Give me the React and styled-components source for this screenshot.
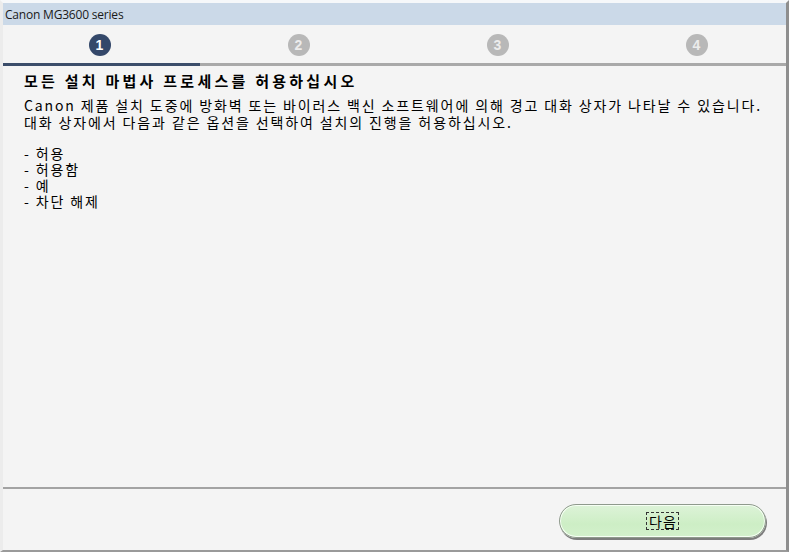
import React from "react";
import styled, { createGlobalStyle } from "styled-components";

const GlobalStyle = createGlobalStyle`
  html, body { margin: 0; padding: 0; background: #f4f4f4; }
  body { font-family: "Noto Sans CJK KR", "Noto Sans", sans-serif; }
`;

const Window = styled.div`
  width: 789px;
  height: 552px;
  box-sizing: border-box;
  display: flex;
  flex-direction: column;
  overflow: hidden;
  background: #f4f4f4;
  border-top: 3px solid #f6f8fa;
  border-left: 3px solid #ececec;
  border-right: 3px solid #8e8e8e;
  border-bottom: 2px solid #9a9a9a;
`;

const TitleBar = styled.div`
  height: 22px;
  background: #cbd9e8;
  display: flex;
  align-items: center;
  padding-left: 2px;
  font-family: "Open Sans", "Liberation Sans", sans-serif;
  font-size: 12px;
  color: #1a1a1a;
  letter-spacing: -0.2px;
`;

const StepRow = styled.div`
  height: 38px;
  margin-left: -3px;
  display: grid;
  grid-template-columns: repeat(4, 199px);
  align-items: center;
  justify-items: center;
`;

const StepDot = styled.div`
  width: 22px;
  height: 22px;
  border-radius: 50%;
  background: ${(p) => (p.$active ? "#34486a" : "#b8b8b8")};
  color: ${(p) => (p.$active ? "#ffffff" : "#ececec")};
  display: flex;
  align-items: center;
  justify-content: center;
  font-family: "Liberation Sans", Arial, sans-serif;
  font-weight: bold;
  font-size: 14px;
  margin-top: 2px;
`;

const Track = styled.div`
  height: 3px;
  background: #a9a9a9;
  display: flex;
`;

const TrackFill = styled.div`
  width: 197px;
  background: #3b4d6a;
`;

const Content = styled.div`
  flex: 1;
  padding: 4px 0 0 21px;
  color: #000;
`;

const Heading = styled.h1`
  margin: 0 0 5px;
  font-size: 15px;
  font-weight: bold;
  line-height: 22px;
  letter-spacing: 3.25px;
`;

const Para = styled.p`
  margin: 0 0 14px;
  font-size: 14px;
  line-height: 17px;
  letter-spacing: 1.88px;
  white-space: nowrap;
`;

const OptionList = styled.ul`
  list-style: none;
  margin: 0;
  padding: 0;
  font-size: 14px;
  line-height: 16px;
  letter-spacing: 1.88px;

  li { height: 16px; }
`;

const Footer = styled.div`
  height: 63px;
  border-top: 2px solid #a3a3a3;
  display: flex;
  justify-content: flex-end;
  align-items: flex-start;
  padding: 15px 20px 0 0;
  box-sizing: border-box;
`;

const NextButton = styled.button`
  width: 207px;
  height: 34px;
  border-radius: 17px;
  border: 1px solid #8f9a8d;
  background: linear-gradient(#ddf3d8, #cdeec5 60%, #d3f0cc);
  box-shadow: inset 0 0 0 1px #f6fff4, 1px 2px 0 #7d7d7d;
  display: flex;
  align-items: center;
  justify-content: center;
  cursor: pointer;
  padding: 0;
`;

const ButtonLabel = styled.span`
  font-family: "Noto Sans CJK KR", sans-serif;
  font-size: 14px;
  line-height: 16px;
  letter-spacing: 1px;
  color: #000;
  padding: 0 1px 0 2px;
  outline: 1px dashed #333;
`;

const steps = [1, 2, 3, 4];
const options = ["허용", "허용함", "예", "차단 해제"];

export default function App() {
  return (
    <>
      <GlobalStyle />
      <Window>
        <TitleBar>Canon MG3600 series</TitleBar>
        <StepRow>
          {steps.map((n) => (
            <StepDot key={n} $active={n === 1}>{n}</StepDot>
          ))}
        </StepRow>
        <Track>
          <TrackFill />
        </Track>
        <Content>
          <Heading>모든 설치 마법사 프로세스를 허용하십시오</Heading>
          <Para>
            Canon 제품 설치 도중에 방화벽 또는 바이러스 백신 소프트웨어에 의해 경고 대화 상자가 나타날 수 있습니다.
            <br />
            대화 상자에서 다음과 같은 옵션을 선택하여 설치의 진행을 허용하십시오.
          </Para>
          <OptionList>
            {options.map((o) => (
              <li key={o}>- {o}</li>
            ))}
          </OptionList>
        </Content>
        <Footer>
          <NextButton>
            <ButtonLabel>다음</ButtonLabel>
          </NextButton>
        </Footer>
      </Window>
    </>
  );
}
